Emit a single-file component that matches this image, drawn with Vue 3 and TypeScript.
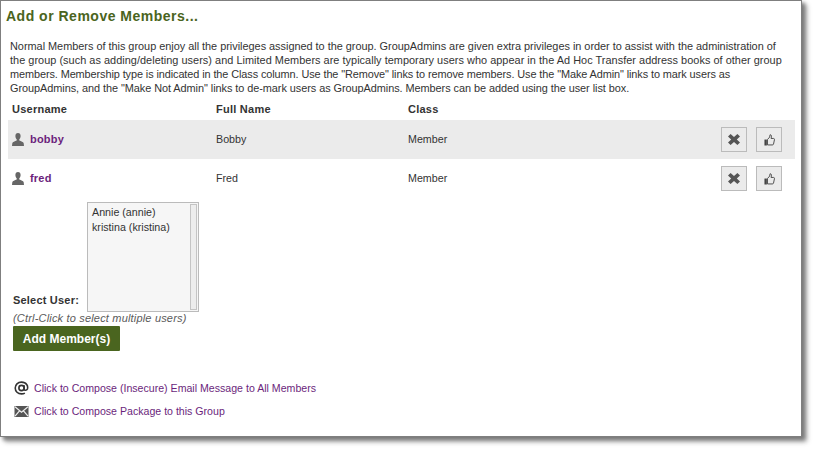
<script setup lang="ts">
interface Member { username: string; fullName: string; role: string }
const members: Member[] = [
  { username: 'bobby', fullName: 'Bobby', role: 'Member' },
  { username: 'fred', fullName: 'Fred', role: 'Member' },
]
const users: string[] = ['Annie (annie)', 'kristina (kristina)']
</script>

<template>
  <div class="page">
    <section class="card">
      <h1 class="title">Add or Remove Members...</h1>
      <p class="intro">
        <span class="line l1">Normal Members of this group enjoy all the privileges assigned to the group. GroupAdmins are given extra privileges in order to assist with the administration of</span>
        <span class="line l2">the group (such as adding/deleting users) and Limited Members are typically temporary users who appear in the Ad Hoc Transfer address books of other group</span>
        <span class="line l3">members. Membership type is indicated in the Class column. Use the "Remove" links to remove members. Use the "Make Admin" links to mark users as</span>
        <span class="line l4">GroupAdmins, and the "Make Not Admin" links to de-mark users as GroupAdmins. Members can be added using the user list box.</span>
      </p>
      <div class="table">
        <div class="head">
          <span class="c1">Username</span>
          <span class="c2">Full Name</span>
          <span class="c3">Class</span>
        </div>
        <div v-for="(m, i) in members" :key="m.username" class="row" :class="{ odd: i === 0 }">
          <span class="c1 user">
            <svg class="person" width="12" height="13" viewBox="0 0 12 13">
              <path fill="#666" d="M6 0C4.3 0 3.4 1.2 3.4 3c0 1.500.6 2.700 1.300 3.300v1.300C3 8.500.6 9 .3 10.300L0 13h12l-.3-2.700C11.400 9 9 8.500 7.300 7.600V6.300C8 5.700 8.600 4.500 8.600 3 8.600 1.200 7.700 0 6 0z" />
            </svg>
            <a class="uname">{{ m.username }}</a>
          </span>
          <span class="c2">{{ m.fullName }}</span>
          <span class="c3">{{ m.role }}</span>
          <span class="actions">
            <button class="icon-btn" type="button" aria-label="Remove">
              <svg width="12" height="11" viewBox="0 0 12 11">
                <path fill="#555" d="M2.600 0 6 3 9.400 0 12 2.500 8.800 5.500 12 8.500 9.400 11 6 8 2.600 11 0 8.500 3.200 5.500 0 2.500z" />
              </svg>
            </button>
            <button class="icon-btn" type="button" aria-label="Make Admin">
              <svg width="11" height="12" viewBox="0 0 12 13">
                <path fill="none" stroke="#444" stroke-width="1" d="M3.800 6 6.200 3.300 6.600.8c1.300 0 1.800 1 1.500 2.200L7.700 4.800h2.700c.8 0 1.200.7 1 1.400l-1 4.700c-.2.700-.6 1-1.300 1H3.800z" />
                <rect x="0.500" y="6" width="2.600" height="6.500" fill="#444" />
              </svg>
            </button>
          </span>
        </div>
      </div>
      <div class="select-line">
        <label class="select-label">Select User:</label>
        <div class="listbox">
          <div class="options">
            <div v-for="u in users" :key="u" class="option">{{ u }}</div>
          </div>
          <div class="scroll"></div>
        </div>
      </div>
      <div class="hint">(Ctrl-Click to select multiple users)</div>
      <button class="add" type="button">Add Member(s)</button>
      <div class="links">
        <div class="link-row">
          <svg width="16" height="16" viewBox="0 0 16 16">
            <circle cx="8" cy="8" r="2.800" fill="none" stroke="#333" stroke-width="1.700" />
            <path fill="none" stroke="#333" stroke-width="1.700" d="M10.800 5v4.200c0 1.500 2.800 1.700 3.500-.2.900-3-.8-7.300-6.300-7.300C4 1.700 1.300 4.500 1.300 8c0 3.700 2.800 6.300 6.700 6.300 1.500 0 2.600-.3 3.600-.9" />
          </svg>
          <a class="link">Click to Compose (Insecure) Email Message to All Members</a>
        </div>
        <div class="link-row">
          <svg width="14" height="11" viewBox="0 0 14 11">
            <rect width="14" height="11" fill="#555" />
            <path fill="none" stroke="#eee" stroke-width="1.200" d="M.5.800 7 6.200 13.500.8M.5 10.200 5 4.800M13.500 10.200 9 4.800" />
          </svg>
          <a class="link">Click to Compose Package to this Group</a>
        </div>
      </div>
    </section>
  </div>
</template>

<style>
html, body { margin: 0; background: #fff; }
</style>

<style scoped>
.page {
  width: 817px;
  height: 453px;
  overflow: hidden;
  font-family: "Liberation Sans", Arial, sans-serif;
  font-size: 10.7px;
  color: #333;
}
.card {
  box-sizing: border-box;
  width: 802px;
  height: 437px;
  background: #fff;
  border: 1px solid #7f7f7f;
  box-shadow: 3px 3px 4px #777, 5px 5px 5px #bbb;
  padding: 7px 0 0 7px;
}
.title {
  margin: 0 0 0 -2px;
  font-size: 14px;
  line-height: 16px;
  font-weight: bold;
  letter-spacing: 0.5px;
  color: #4a6420;
}
.intro {
  margin: 15px 0 0 2px;
  font-size: 10.92px;
  line-height: 14px;
  white-space: nowrap;
}
.line { display: block; }
.l1 { letter-spacing: -0.018px; }
.l2 { letter-spacing: 0.032px; }
.l3 { letter-spacing: -0.095px; }
.l4 { letter-spacing: -0.057px; }
.table {
  width: 787px;
}
.head {
  display: flex;
  align-items: center;
  height: 25px;
  font-size: 11px;
  font-weight: bold;
  letter-spacing: 0.25px;
  box-sizing: border-box;
  padding-top: 2px;
}
.row {
  display: flex;
  align-items: center;
  height: 39px;
}
.row .c1, .row .c2, .row .c3 { padding-bottom: 2px; }
.odd { background: #ebebeb; }
.c1 { width: 208px; box-sizing: border-box; padding-left: 4px; }
.c2 { width: 192px; }
.c3 { width: 100px; }
.user { display: flex; align-items: center; gap: 6px; }
.person { flex: none; margin-top: 1px; }
.uname { font-size: 11px; font-weight: bold; color: #6b1f7c; letter-spacing: 0.2px; }
.actions { margin-left: auto; display: flex; gap: 9px; padding-right: 13px; }
.icon-btn {
  box-sizing: border-box;
  width: 26px;
  height: 25px;
  padding: 0;
  margin: 0;
  display: flex;
  align-items: center;
  justify-content: center;
  background: #ebebeb;
  border: 1px solid #bbb;
}
.select-line { display: flex; align-items: flex-end; margin-top: 4px; }
.select-label {
  margin-left: 5px;
  width: 74px;
  font-weight: bold;
  font-size: 11px;
  letter-spacing: 0.2px;
  line-height: 14px;
  padding-bottom: 5px;
}
.listbox {
  box-sizing: border-box;
  width: 112px;
  height: 110px;
  display: flex;
  padding: 1px;
  background: #f6f6f6;
  border: 1px solid #bbb;
}
.options { flex: 1; padding: 1px 3px; }
.option { line-height: 15px; color: #333; }
.scroll {
  box-sizing: border-box;
  width: 7px;
  background: #ededed;
  border: 1px solid #c4c4c4;
}
.hint {
  margin: 0 0 0 5px;
  line-height: 13px;
  font-size: 11px;
  font-style: italic;
  color: #5a5a5a;
  letter-spacing: 0.18px;
}
.add {
  display: block;
  box-sizing: border-box;
  width: 107px;
  height: 25px;
  margin: 1px 0 0 5px;
  padding: 0;
  background: #4a651f;
  color: #fff;
  border: 0;
  border-radius: 1px;
  font-family: inherit;
  font-size: 12px;
  font-weight: bold;
}
.links { margin: 29px 0 0 6px; display: flex; flex-direction: column; gap: 7px; }
.link-row { display: flex; align-items: center; height: 16px; gap: 5px; }
.link-row svg { flex: none; width: 15px; }
.link { color: #6b1f7c; font-size: 10.6px; }
</style>
